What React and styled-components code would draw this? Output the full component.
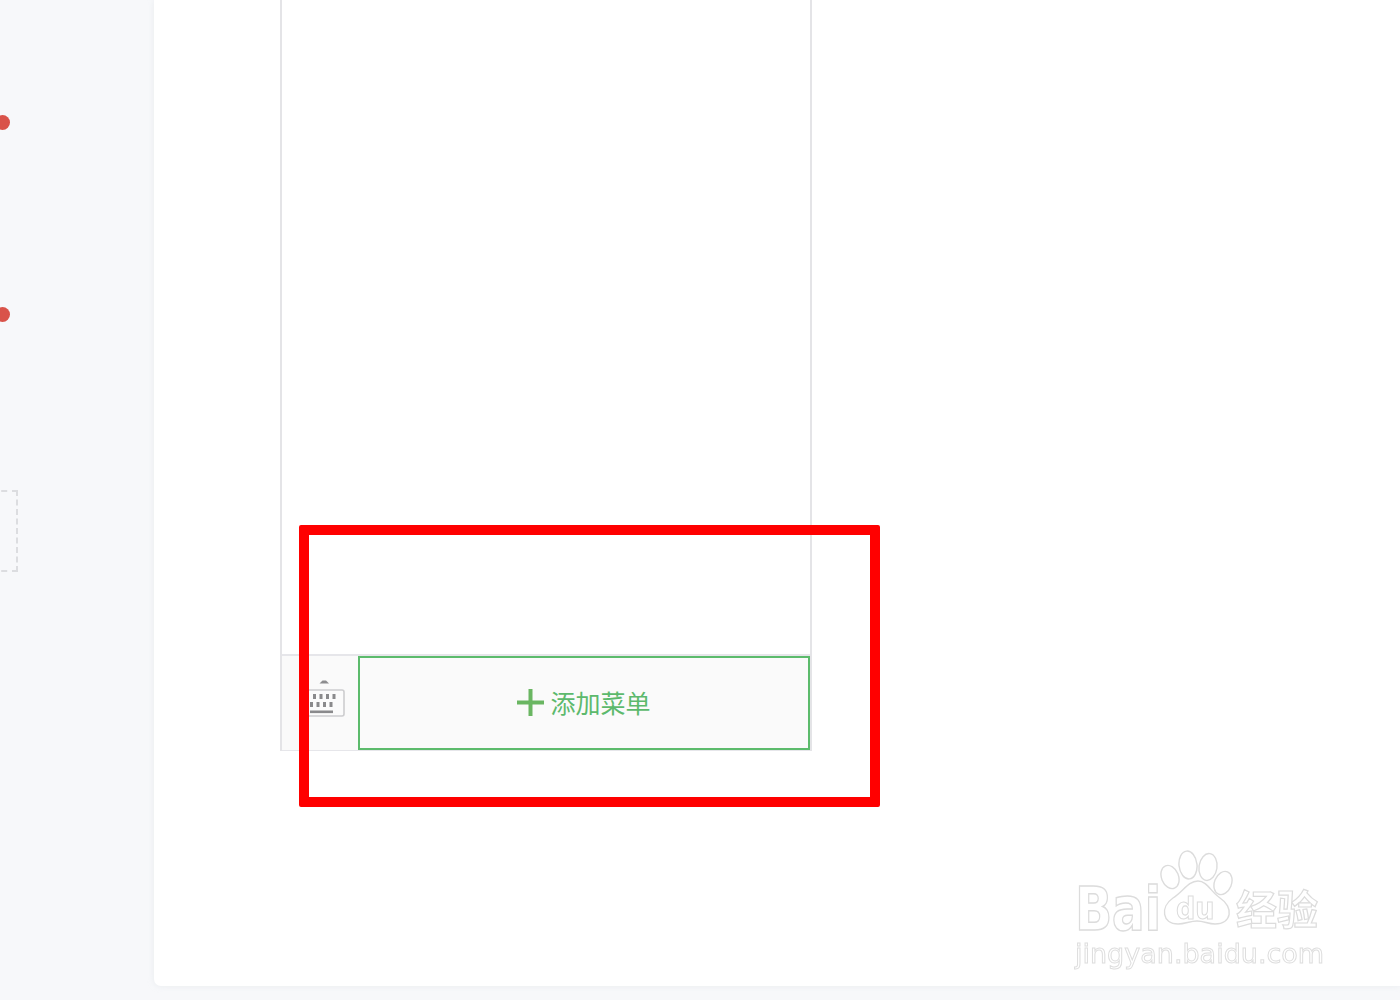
import React from "react";
import styled, { createGlobalStyle } from "styled-components";

const GlobalStyle = createGlobalStyle`
  html, body {
    margin: 0;
    padding: 0;
    background: #f7f8fa;
    overflow: hidden;
  }
  body {
    font-family: "Noto Sans CJK SC", "Noto Sans", sans-serif;
  }
`;

function KeyboardIcon() {
  return (
    <svg width="42" height="42" viewBox="0 0 42 42" fill="none">
      <path d="M15.5 6.5 L18.5 3.5 L22 3.5 L25 6.5 Z" fill="#8d8d8f" />
      <rect x="2" y="13" width="38" height="26" rx="2" fill="#fbfbfb" stroke="#cdcdcf" strokeWidth="1.6" />
      <g fill="#8a8a8c">
        <rect x="9" y="17" width="3" height="5" />
        <rect x="15.5" y="17" width="3" height="5" />
        <rect x="22" y="17" width="3" height="5" />
        <rect x="28.5" y="17" width="3" height="5" />
        <rect x="6" y="25" width="3" height="5" />
        <rect x="12.5" y="25" width="3" height="5" />
        <rect x="19" y="25" width="3" height="5" />
        <rect x="25.5" y="25" width="3" height="5" />
        <rect x="6" y="33.5" width="23" height="2.6" />
      </g>
    </svg>
  );
}

function PlusIcon() {
  return (
    <svg width="27" height="27" viewBox="0 0 27 27">
      <path d="M13.5 0 V27 M0 13.5 H27" stroke="#6ab662" strokeWidth="4" />
    </svg>
  );
}

function PawIcon() {
  return (
    <PawSvg width="73" height="75" viewBox="0 0 73 75" fill="#fff" stroke="#dcdcdc" strokeWidth="1.4">
      <ellipse cx="10" cy="27" rx="8.5" ry="12" transform="rotate(-22 10 27)" />
      <ellipse cx="28" cy="15" rx="9" ry="14" transform="rotate(-6 28 15)" />
      <ellipse cx="48" cy="17" rx="9" ry="13.5" transform="rotate(8 48 17)" />
      <ellipse cx="63" cy="33" rx="8.5" ry="12" transform="rotate(22 63 33)" />
      <path d="M38 31 C47 31 51 42 60 48 C74 57 72 74 55 74 C48 74 44 71 37 71 C30 71 25 74 18 74 C2 74 0 57 13 48 C23 42 28 31 38 31 Z" />
    </PawSvg>
  );
}

export default function App() {
  return (
    <Page>
      <GlobalStyle />
      <Sidebar>
        <Dot />
        <Dot $gap={177} />
        <DashedBox />
      </Sidebar>
      <Card>
        <Phone>
          <PhoneBody />
          <MenuBar>
            <KeyboardCell>
              <KeyboardIcon />
            </KeyboardCell>
            <AddMenuButton>
              <PlusIcon />
              <span>添加菜单</span>
            </AddMenuButton>
          </MenuBar>
        </Phone>
      </Card>
      <Highlight />
      <Watermark>
        <BrandRow>
          <BrandText>Bai</BrandText>
          <PawWrap>
            <PawIcon />
            <PawText>du</PawText>
          </PawWrap>
          <BrandCn>经验</BrandCn>
        </BrandRow>
        <Domain>jingyan.baidu.com</Domain>
      </Watermark>
    </Page>
  );
}

const Page = styled.div`
  position: relative;
  display: flex;
  width: 1400px;
  height: 1000px;
  overflow: hidden;
  background: #f7f8fa;
`;

const Sidebar = styled.aside`
  flex: 0 0 154px;
  display: flex;
  flex-direction: column;
  align-items: flex-start;
  padding-top: 115px;
  box-sizing: border-box;
`;

const Dot = styled.span`
  display: block;
  width: 15px;
  height: 15px;
  margin-left: -5px;
  margin-top: ${(p) => p.$gap || 0}px;
  border-radius: 50%;
  background: #d9534a;
`;

const DashedBox = styled.div`
  width: 60px;
  height: 82px;
  margin-left: -42px;
  margin-top: 168px;
  box-sizing: border-box;
  border: 2px dashed #dcdde0;
`;

const Card = styled.main`
  flex: 1;
  height: 986px;
  padding-left: 126px;
  box-sizing: border-box;
  background: #fff;
  border-radius: 0 0 0 7px;
  box-shadow: 0 0 6px rgba(210, 214, 222, 0.35);
`;

const Phone = styled.section`
  display: flex;
  flex-direction: column;
  width: 532px;
  height: 751px;
  box-sizing: border-box;
  border-left: 2px solid #e4e4e7;
  border-right: 2px solid #e4e4e7;
`;

const PhoneBody = styled.div`
  flex: 1;
  background: #fff;
`;

const MenuBar = styled.footer`
  display: flex;
  height: 97px;
  box-sizing: border-box;
  border-top: 2px solid #e6e6ea;
  border-bottom: 1px solid #e6e6ea;
  background: #fafafa;
`;

const KeyboardCell = styled.div`
  flex: 0 0 76px;
  display: flex;
  align-items: center;
  justify-content: center;
  padding: 0 0 11px 10px;
  box-sizing: border-box;
`;

const AddMenuButton = styled.button`
  flex: 1;
  display: flex;
  align-items: center;
  justify-content: center;
  gap: 6px;
  margin: 0;
  padding: 0 0 2px;
  background: #fafafa;
  border: 2px solid #5cbb6c;
  color: #5cb96c;
  font-family: "Noto Sans CJK SC", sans-serif;
  font-size: 25px;
  font-weight: 400;
  line-height: 1;
`;

const Highlight = styled.div`
  position: absolute;
  left: 299px;
  top: 525px;
  width: 581px;
  height: 282px;
  box-sizing: border-box;
  border: 10px solid #ff0000;
  border-radius: 2px;
  pointer-events: none;
`;

const Watermark = styled.div`
  position: absolute;
  left: 1075px;
  top: 850px;
  width: 256px;
  display: flex;
  flex-direction: column;
  filter: blur(0.4px);
  pointer-events: none;
`;

const BrandRow = styled.div`
  display: flex;
  align-items: flex-end;
  height: 86px;
`;

const BrandText = styled.span`
  display: inline-block;
  width: 85px;
  margin-bottom: -4px;
  font-family: "DejaVu Sans", sans-serif;
  font-size: 49px;
  font-weight: 700;
  line-height: 1;
  color: #fff;
  -webkit-text-stroke: 1.2px #dcdcdc;
  letter-spacing: -0.5px;
  transform: scaleY(1.25);
  transform-origin: bottom left;
`;

const PawWrap = styled.div`
  position: relative;
  width: 73px;
  height: 86px;
  flex: none;
`;

const PawSvg = styled.svg`
  position: absolute;
  left: 0;
  top: 0;
`;

const PawText = styled.span`
  position: absolute;
  left: 16px;
  top: 45px;
  font-family: "DejaVu Sans", sans-serif;
  font-size: 27px;
  font-weight: 700;
  line-height: 1;
  color: #fff;
  -webkit-text-stroke: 1px #dcdcdc;
  transform: scaleY(1.12);
`;

const BrandCn = styled.span`
  margin: 0 0 8px 3px;
  font-family: "Noto Sans CJK SC", sans-serif;
  font-size: 41px;
  font-weight: 700;
  line-height: 1;
  white-space: nowrap;
  color: #fff;
  -webkit-text-stroke: 1.2px #dcdcdc;
`;

const Domain = styled.div`
  margin-top: 1px;
  font-family: "DejaVu Sans", sans-serif;
  font-size: 27px;
  line-height: 34px;
  white-space: nowrap;
  color: #fff;
  -webkit-text-stroke: 1px #dedede;
`;
